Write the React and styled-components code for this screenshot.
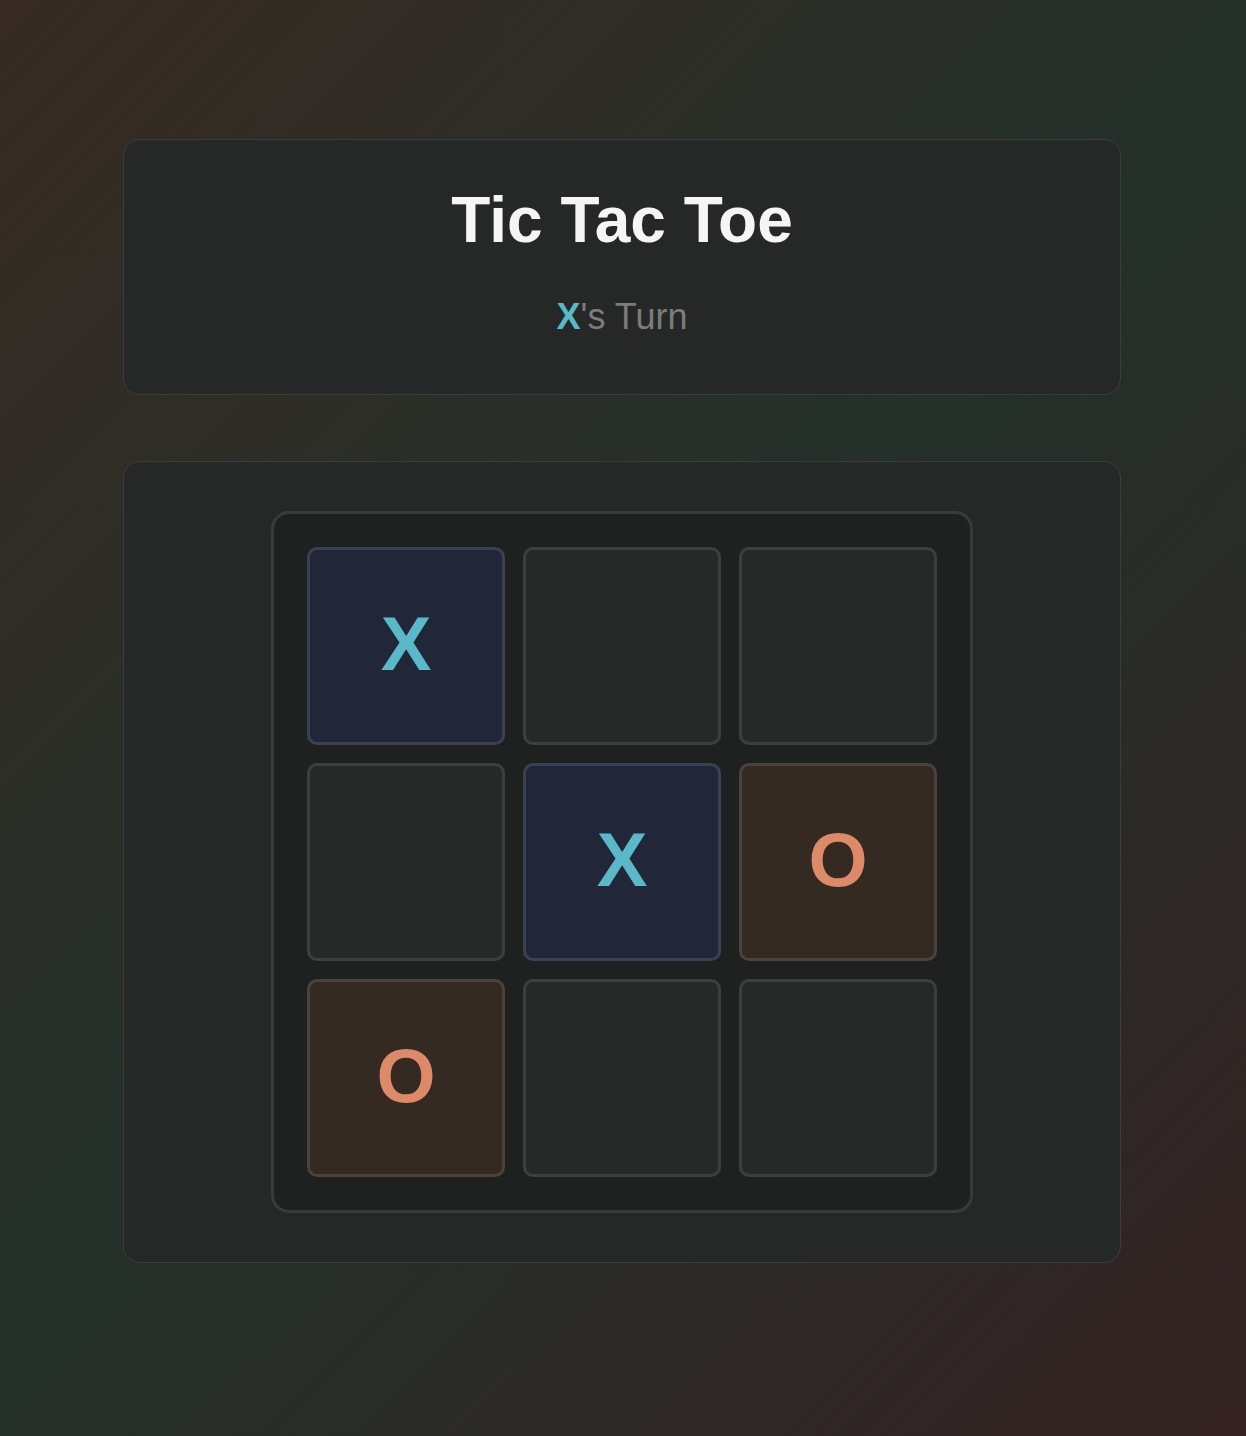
import React from "react"
import styled, { createGlobalStyle } from "styled-components"

const GlobalStyle = createGlobalStyle`
  html, body {
    margin: 0;
    padding: 0;
  }
  body {
    font-family: "Liberation Sans", Arial, sans-serif;
    background: linear-gradient(135deg, #362a22 0%, #24302a 50%, #342222 100%);
    min-height: 100vh;
  }
`

const Page = styled.div`
  width: 1244px;
  min-height: 1436px;
  box-sizing: border-box;
  padding-top: 139px;
  display: flex;
  flex-direction: column;
  align-items: center;
  gap: 66px;
`

const Card = styled.div`
  width: 998px;
  box-sizing: border-box;
  background: #262827;
  border: 1px solid #393d3b;
  border-radius: 17px;
  padding: ${p => p.$pad};
  display: flex;
  flex-direction: column;
  align-items: center;
`

const Title = styled.h1`
  margin: 0;
  color: #f5f5f5;
  font-size: 64px;
  font-weight: 700;
  line-height: 1;
`

const Status = styled.div`
  margin-top: 47px;
  font-size: 36px;
  color: #7c7c7c;
  line-height: 1;
`

const Mark = styled.span`
  color: #5bb8c8;
  font-weight: 700;
`

const Board = styled.div`
  display: grid;
  grid-template-columns: repeat(3, 198px);
  grid-auto-rows: 198px;
  gap: 18px;
  padding: 33px;
  background: #1f2120;
  border: 3px solid #393b3a;
  border-radius: 18px;
`

const Cell = styled.div`
  box-sizing: border-box;
  border-radius: 10px;
  border: 3px solid ${p => (p.$v === "X" ? "#3b4152" : p.$v === "O" ? "#4a423b" : "#3d3f3e")};
  background: ${p => (p.$v === "X" ? "#212639" : p.$v === "O" ? "#342a22" : "#272928")};
  color: ${p => (p.$v === "X" ? "#5bb8c8" : "#dc8a6a")};
  display: flex;
  align-items: center;
  justify-content: center;
  padding-bottom: 6px;
  font-size: 76px;
  font-weight: 700;
`

const cells = ["X", "", "", "", "X", "O", "O", "", ""]

export default function App() {
  return (
    <>
      <GlobalStyle />
      <Page>
        <Card $pad="48px 0 59px">
          <Title>Tic Tac Toe</Title>
          <Status>
            <Mark>X</Mark>'s Turn
          </Status>
        </Card>
        <Card $pad="49px 0">
          <Board>
            {cells.map((v, i) => (
              <Cell key={i} $v={v}>{v}</Cell>
            ))}
          </Board>
        </Card>
      </Page>
    </>
  )
}
